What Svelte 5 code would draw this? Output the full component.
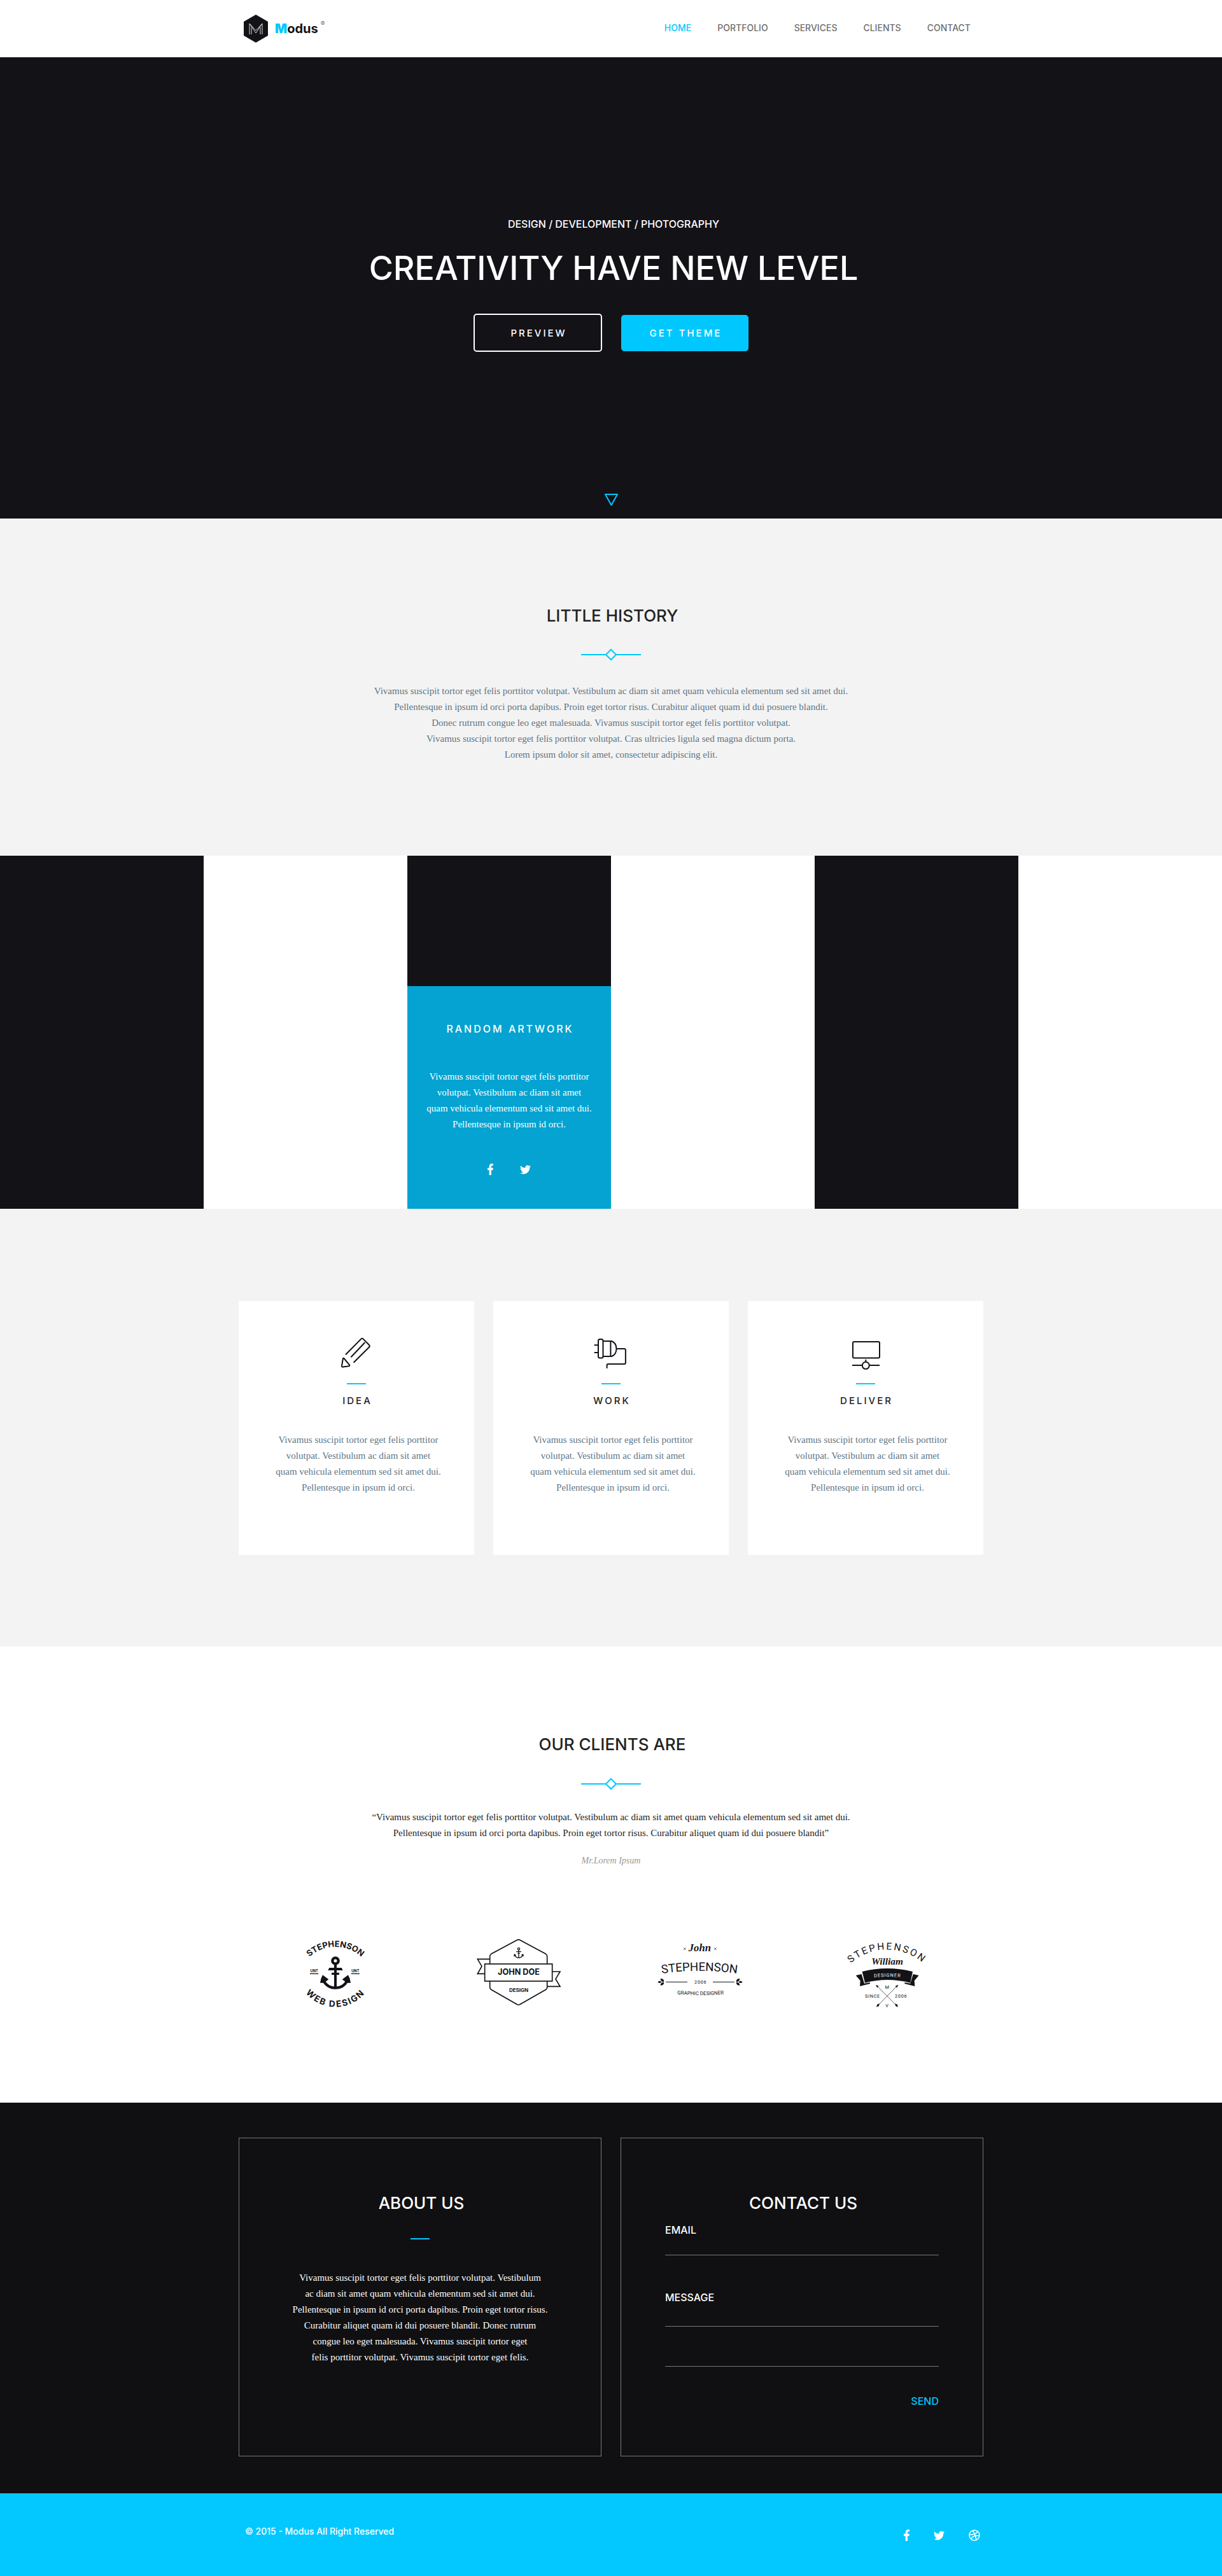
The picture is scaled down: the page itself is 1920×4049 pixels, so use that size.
<script>
  const nav = ['Home', 'Portfolio', 'Services', 'Clients', 'Contact'];
  const blurb = [
    'Vivamus suscipit tortor eget felis porttitor',
    'volutpat. Vestibulum ac diam sit amet',
    'quam vehicula elementum sed sit amet dui.',
    'Pellentesque in ipsum id orci.'
  ];
  const history = [
    'Vivamus suscipit tortor eget felis porttitor volutpat. Vestibulum ac diam sit amet quam vehicula elementum sed sit amet dui.',
    'Pellentesque in ipsum id orci porta dapibus. Proin eget tortor risus. Curabitur aliquet quam id dui posuere blandit.',
    'Donec rutrum congue leo eget malesuada. Vivamus suscipit tortor eget felis porttitor volutpat.',
    'Vivamus suscipit tortor eget felis porttitor volutpat. Cras ultricies ligula sed magna dictum porta.',
    'Lorem ipsum dolor sit amet, consectetur adipiscing elit.'
  ];
  const quote = [
    '“Vivamus suscipit tortor eget felis porttitor volutpat. Vestibulum ac diam sit amet quam vehicula elementum sed sit amet dui.',
    'Pellentesque in ipsum id orci porta dapibus. Proin eget tortor risus. Curabitur aliquet quam id dui posuere blandit”'
  ];
  const about = [
    'Vivamus suscipit tortor eget felis porttitor volutpat. Vestibulum',
    'ac diam sit amet quam vehicula elementum sed sit amet dui.',
    'Pellentesque in ipsum id orci porta dapibus. Proin eget tortor risus.',
    'Curabitur aliquet quam id dui posuere blandit. Donec rutrum',
    'congue leo eget malesuada. Vivamus suscipit tortor eget',
    'felis porttitor volutpat. Vivamus suscipit tortor eget felis.'
  ];
  const services = ['Idea', 'Work', 'Deliver'];
</script>

{#snippet lines(list)}
  {#each list as line}<span class="line">{line}</span>{/each}
{/snippet}

{#snippet divider()}
  <svg class="divider" width="94" height="20" viewBox="0 0 94 20" aria-hidden="true">
    <path d="M0 10H39M55 10H94M47 2L55 10L47 18L39 10Z" />
  </svg>
{/snippet}

{#snippet facebook()}
  <svg width="9" height="18" viewBox="22 0 275 512" preserveAspectRatio="none" aria-hidden="true">
    <path fill="currentColor" d="M279.14 288l14.22-92.66h-88.91v-60.13c0-25.35 12.42-50.06 52.24-50.06h40.42V6.26S260.43 0 225.36 0c-73.22 0-121.08 44.38-121.08 124.72v70.62H22.89V288h81.39v224h100.17V288z" />
  </svg>
{/snippet}

{#snippet twitter()}
  <svg width="17" height="17" viewBox="0 0 24 24" aria-hidden="true">
    <path fill="currentColor" d="M23.953 4.57a10 10 0 01-2.825.775 4.958 4.958 0 002.163-2.723c-.951.555-2.005.959-3.127 1.184a4.92 4.92 0 00-8.384 4.482C7.69 8.095 4.067 6.13 1.64 3.162a4.822 4.822 0 00-.666 2.475c0 1.71.87 3.213 2.188 4.096a4.904 4.904 0 01-2.228-.616v.06a4.923 4.923 0 003.946 4.827 4.996 4.996 0 01-2.212.085 4.936 4.936 0 004.604 3.417 9.867 9.867 0 01-6.102 2.105c-.39 0-.779-.023-1.17-.067a13.995 13.995 0 007.557 2.209c9.053 0 13.998-7.496 13.998-13.985 0-.21 0-.42-.015-.63A9.935 9.935 0 0024 4.59z" />
  </svg>
{/snippet}

<header class="top">
  <div class="wrap bar">
    <a class="brand" href="#home">
      <svg width="38" height="44" viewBox="0 0 38 44" aria-hidden="true">
        <path fill="#131217" d="M19 0L38 11V33L19 44L0 33V11Z" />
        <path fill="none" stroke="#d8d8d8" d="M9 31V14L19 29L29 14V31M12 31V20M26 31V20M9 14L19 25L29 14" />
      </svg>
      <span class="name"><b>M</b>odus</span><sup>®</sup>
    </a>
    <nav>
      {#each nav as item, i}
        <a href="#{item.toLowerCase()}" class:active={i === 0}>{item}</a>
      {/each}
    </nav>
  </div>
</header>

<main>
  <section class="hero" id="home">
    <div class="headline">
      <p>Design / Development / Photography</p>
      <h1>Creativity have new level</h1>
    </div>
    <div class="actions">
      <button type="button" class="outline">Preview</button>
      <button type="button" class="solid">Get theme</button>
    </div>
    <a class="down" href="#history" aria-label="Scroll down">
      <svg width="21" height="19" viewBox="0 0 21 19"><path d="M1 1H20L10.500 18Z" /></svg>
    </a>
  </section>

  <section class="history" id="history">
    <h2>Little history</h2>
    {@render divider()}
    <p class="copy">{@render lines(history)}</p>
  </section>

  <section class="gallery" id="portfolio">
    <div class="tile dark"></div>
    <div class="tile"></div>
    <div class="tile dark">
      <article class="overlay">
        <h3>Random artwork</h3>
        <p class="copy">{@render lines(blurb)}</p>
        <div class="social">
          <a href="#facebook" aria-label="Facebook">{@render facebook()}</a>
          <a href="#twitter" aria-label="Twitter">{@render twitter()}</a>
        </div>
      </article>
    </div>
    <div class="tile"></div>
    <div class="tile dark"></div>
    <div class="tile"></div>
  </section>

  <section class="services" id="services">
    <div class="wrap cards">
      {#each services as title, i}
        <article class="card">
          <svg class="icon" width="50" height="50" viewBox="0 0 50 50" aria-hidden="true">
            {#if i === 0}
              <path d="M8 27.300L32.600 2.400Q34 1 35.400 2.400L45 12Q46.500 14 45 15.500L20.600 39.700M38.400 8L16.400 31.300M3.900 33.500L2 45Q2 47 4 46.600L13.500 45.200Q14.800 44.600 14 43.400L5.800 33.500Q4.600 32.200 3.900 33.500Z" />
            {:else if i === 1}
              <rect x="5" y="3" width="7.500" height="29.500" rx="2.500" />
              <path d="M12.500 6H26Q33.500 9 33.500 18Q33.500 27 26 30H12.500M24.400 6V30M-1.300 12.300H5M-1.300 24H5M33.500 18H45.900Q47.900 18 47.900 20V40Q47.900 42 45.900 42H20.600Q18.600 42 18.600 44V48.700" />
            {:else}
              <rect x="5" y="7" width="42" height="25.500" rx="2" />
              <path d="M4 44H19.500M31 44H47M25.300 35V38.500" />
              <circle cx="25.300" cy="44.300" r="5.500" />
            {/if}
          </svg>
          <i class="dash"></i>
          <h3>{title}</h3>
          <p class="copy">{@render lines(blurb)}</p>
        </article>
      {/each}
    </div>
  </section>

  <section class="clients" id="clients">
    <h2>Our clients are</h2>
    {@render divider()}
    <blockquote class="copy">
      {@render lines(quote)}
      <cite>Mr.Lorem Ipsum</cite>
    </blockquote>
    <div class="logos">
      <svg width="160" height="120" viewBox="30 60 480 360" role="img" aria-label="Stephenson Web Design">
        <path id="arc-a" fill="none" d="M86 301A181 181 0 1 1 448 301" />
        <path id="arc-b" fill="none" d="M86 223A181 181 0 0 0 448 223" />
        <g class="wide" text-anchor="middle">
          <text font-size="39"><textPath href="#arc-a" startOffset="50%">STEPHENSON</textPath></text>
          <text font-size="41" letter-spacing="6"><textPath href="#arc-b" startOffset="50%">WEB DESIGN</textPath></text>
          <text x="167" y="240" font-size="17">UNT</text>
          <text x="361" y="240" font-size="17">UNT</text>
        </g>
        <path d="M147 245h40v4h-40zM341 245h40v4h-40zM261 198h12v112h-12zM238 219H296L302 231H232ZM249 242H285V252H249ZM207 253L235 274L221 284L225 290H195Q197 270 207 253ZM327 253L299 274L313 284L309 290H339Q337 270 327 253Z" />
        <g fill="none" stroke="#131217" stroke-width="13">
          <circle cx="267" cy="186" r="14" />
          <path d="M212 282Q230 314 267 314Q304 314 322 282" />
        </g>
      </svg>

      <svg width="160" height="120" viewBox="894 60 480 360" role="img" aria-label="John Doe Design">
        <g fill="none" stroke="#131217" stroke-width="5">
          <path d="M1124 88Q1130 84 1136 88L1259 154Q1265 158 1265 166V312Q1265 318 1259 322L1136 392Q1130 396 1124 392L1001 322Q995 318 995 312V166Q995 158 1001 154Z" />
          <path d="M995 178H937L957 212L937 247H970M1290 237H1326L1305 272L1326 307H1266" />
          <rect x="971" y="201" width="318" height="81" fill="#fff" />
        </g>
        <g fill="none" stroke="#131217" stroke-width="4">
          <circle cx="1131" cy="130" r="5" />
          <path d="M1131 135V172M1119 143H1143M1126 151H1136M1112 161Q1119 172 1131 172Q1143 172 1150 161" />
        </g>
        <path d="M1110 152L1120 160L1107 166ZM1152 152L1142 160L1155 166Z" />
        <g class="wide" text-anchor="middle">
          <text x="1131" y="253" font-size="38">JOHN DOE</text>
          <text x="1131" y="332" font-size="24">DESIGN</text>
        </g>
      </svg>

      <svg width="160" height="120" viewBox="78 60 480 360" role="img" aria-label="John Stephenson, graphic designer">
        <path id="arc-c" fill="none" d="M106 249Q304 217 500 249" />
        <path id="arc-d" fill="none" d="M180 343Q308 353 436 343" />
        <path fill="none" stroke="#131217" stroke-width="2" d="M228 124l11 11M239 124l-11 11M372 124l11 11M383 124l-11 11" />
        <path fill="none" stroke="#131217" stroke-width="3" d="M145 286H246M366 286H468" />
        <path d="M106 286Q115 276 125 286Q115 296 106 286ZM119 270Q136 270 136 285Q120 286 119 270ZM119 302Q136 302 136 287Q120 286 119 302ZM506 286Q497 276 487 286Q497 296 506 286ZM493 270Q476 270 476 285Q492 286 493 270ZM493 302Q476 302 476 287Q492 286 493 302Z" />
        <text class="script" x="304" y="142" font-size="50" text-anchor="middle">John</text>
        <g class="narrow" text-anchor="middle">
          <text font-size="56"><textPath href="#arc-c" startOffset="50%">STEPHENSON</textPath></text>
          <text x="308" y="294" font-size="22" letter-spacing="2">2006</text>
          <text font-size="24"><textPath href="#arc-d" startOffset="50%">GRAPHIC DESIGNER</textPath></text>
        </g>
      </svg>

      <svg width="160" height="120" viewBox="942 60 480 360" role="img" aria-label="Stephenson William, designer since 2006">
        <path id="arc-e" fill="none" d="M930 390A257 257 0 0 1 1444 390" />
        <path id="arc-f" fill="none" d="M1090 268Q1188 254 1288 268" />
        <path d="M1070 237Q1188 207 1308 237L1297 290Q1188 262 1083 290ZM1040 255L1067 249L1080 293L1107 288V294L1059 306L1061 280ZM1337 255L1310 249L1297 293L1270 288V294L1318 306L1316 280Z" />
        <path fill="none" stroke="#131217" stroke-width="2" d="M1140 305L1236 401M1234 305L1140 401" />
        <path d="M1134 299L1148 305L1140 313ZM1240 299L1226 305L1234 313ZM1138 404L1140 392L1152 388L1148 400ZM1238 404L1236 392L1224 388L1228 400Z" />
        <text class="script" x="1188" y="205" font-size="46" text-anchor="middle">William</text>
        <g class="narrow" text-anchor="middle">
          <text font-size="46" letter-spacing="8"><textPath href="#arc-e" startOffset="50%">STEPHENSON</textPath></text>
          <text class="light" font-size="22" letter-spacing="3"><textPath href="#arc-f" startOffset="50%">DESIGNER</textPath></text>
          <text x="1187" y="318" font-size="22">M</text>
          <text x="1187" y="405" font-size="22">V</text>
          <text x="1119" y="361" font-size="22" letter-spacing="2">SINCE</text>
          <text x="1253" y="361" font-size="22" letter-spacing="2">2006</text>
        </g>
      </svg>
    </div>
  </section>

  <section class="info" id="contact">
    <div class="wrap panels">
      <article class="panel">
        <h2>About us</h2>
        <i class="dash"></i>
        <p class="copy">{@render lines(about)}</p>
      </article>
      <form class="panel" onsubmit={(e) => e.preventDefault()}>
        <h2>Contact us</h2>
        <label for="email">Email</label>
        <input id="email" type="email" />
        <label for="message" class="second">Message</label>
        <textarea id="message"></textarea>
        <button type="submit">Send</button>
      </form>
    </div>
  </section>
</main>

<footer>
  <div class="wrap legal">
    <p>© 2015 - Modus All Right Reserved</p>
    <div class="social">
      <a href="#facebook" aria-label="Facebook">{@render facebook()}</a>
      <a href="#twitter" aria-label="Twitter">{@render twitter()}</a>
      <a href="#dribbble" aria-label="Dribbble">
        <svg width="18" height="18" viewBox="0 0 18 18" fill="none" stroke="currentColor" stroke-width="1.500">
          <circle cx="9" cy="9" r="8" />
          <path d="M6 1.500Q10.500 7 12 16.500M1 8Q10 8.500 14.500 3M3.500 15Q7.500 8 17 10" />
        </svg>
      </a>
    </div>
  </div>
</footer>

<style>
  :global(body) {
    background: #fff;
    color: #232323;
    font-family: Inter, 'Liberation Sans', sans-serif;
  }
  h1, h2, h3, p, blockquote { margin: 0; font-weight: 500; }
  a { color: inherit; text-decoration: none; }
  svg { display: block; overflow: visible; }
  button { padding: 0; border: 0; background: none; color: inherit; font: inherit; text-transform: uppercase; cursor: pointer; }
  h1, h2, h3 { text-transform: uppercase; }
  h2 { padding-left: 4px; font-size: 26px; line-height: 36px; }
  h3 { padding-left: 3px; font-size: 15px; line-height: 20px; letter-spacing: 3px; }
  .wrap { max-width: 1170px; margin: 0 auto; }
  .copy { font-family: 'Liberation Serif', serif; font-size: 15px; line-height: 25px; font-weight: 400; }
  .line { display: block; }
  .dash { display: block; width: 30px; height: 2px; background: #00c8ff; }
  .divider path { fill: none; stroke: #00c8ff; stroke-width: 2; }
  .social { display: flex; align-items: center; gap: 42px; height: 18px; color: #fff; }

  .bar { display: flex; align-items: center; justify-content: space-between; min-height: 90px; padding: 0 20px 0 8px; box-sizing: border-box; }
  .brand { display: flex; align-items: center; color: #131217; }
  .name { margin-left: 11px; font-size: 20px; font-weight: 700; }
  .name b { color: #00c8ff; }
  sup { align-self: flex-start; margin-left: 4px; font-size: 10px; line-height: 28px; color: #6f6f6f; }
  nav { display: flex; gap: 41px; padding-bottom: 2px; font-size: 14px; font-weight: 500; line-height: 20px; color: #6f6f6f; text-transform: uppercase; }
  nav .active { color: #00c8ff; }

  .hero { display: flex; flex-direction: column; align-items: center; padding: 252px 0 20px; background: #131217; color: #fff; }
  .headline { padding-left: 8px; text-align: center; text-transform: uppercase; }
  .headline p { font-size: 16px; line-height: 20px; }
  h1 { margin-top: 30px; font-size: 52px; line-height: 60px; }
  .actions { display: flex; align-items: center; gap: 30px; margin-top: 41px; }
  .actions button { box-sizing: border-box; width: 200px; height: 57px; padding-left: 3px; border-radius: 5px; font-size: 15px; font-weight: 500; letter-spacing: 3px; }
  .actions .outline { width: 202px; height: 60px; border: 2px solid #fff; }
  .actions .solid { background: #00c8ff; }
  .down { margin-top: 223px; }
  .down path { fill: none; stroke: #00c8ff; stroke-width: 2; stroke-linejoin: round; }

  .history, .clients { display: flex; flex-direction: column; align-items: center; text-align: center; }
  .history { padding: 135px 0 146px; background: #f3f3f3; }
  .history .divider { margin: 33px 0 35px; }
  .history .copy { color: #5d7586; }

  .gallery { display: grid; grid-template-columns: repeat(6, 1fr); min-height: 555px; }
  .tile { display: flex; align-items: flex-end; }
  .dark { background: #131217; }
  .overlay { display: flex; flex: 1; flex-direction: column; align-items: center; padding: 57px 0 53px; background: #04a3d1; color: #fff; text-align: center; }
  .overlay h3 { font-size: 16px; }
  .overlay .copy { margin: 53px 0 49px; }

  .services { padding: 145px 0 144px; background: #f3f3f3; }
  .cards { display: grid; grid-template-columns: repeat(3, 1fr); gap: 30px; }
  .card { display: flex; flex-direction: column; align-items: center; padding: 57px 0 93px; background: #fff; text-align: center; }
  .icon { fill: none; stroke: #131217; stroke-width: 2; stroke-linejoin: round; }
  .card .dash { margin: 22px 0 16px; }
  .card .copy { margin-top: 39px; padding-left: 6px; color: #5d7586; }

  .clients { padding: 136px 0 145px; }
  .clients .divider { margin: 34px 0 30px; }
  cite { display: block; margin-top: 18px; color: #999; font-size: 14px; }
  .logos { display: grid; grid-template-columns: repeat(4, 1fr); justify-items: center; width: 100%; max-width: 1152px; margin-top: 103px; }
  .logos svg { fill: #131217; }
  .wide { font-weight: 700; }
  .narrow { font-family: Roboto, sans-serif; }
  .light { fill: #fff; }
  .script { font-family: 'Liberation Serif', serif; font-style: italic; font-weight: 700; }

  .info { padding: 55px 0 58px; background: #101012; color: #fff; }
  .panels { display: grid; grid-template-columns: 1fr 1fr; gap: 30px; }
  .panel { display: flex; flex-direction: column; align-items: center; min-height: 501px; padding: 84px 69px 0; box-sizing: border-box; border: 1px solid #77787a; }
  .panel .dash { margin: 37px 0 48px; }
  .panel .copy { text-align: center; }
  label { align-self: flex-start; margin-top: 14px; font-size: 16px; font-weight: 500; line-height: 20px; text-transform: uppercase; }
  .second { margin-top: 56px; }
  input, textarea { box-sizing: border-box; width: 100%; padding: 0; border: 0; background: none; color: #fff; font: inherit; font-size: 15px; outline: 0; }
  input { height: 30px; border-bottom: 1px solid #77787a; }
  textarea { height: 99px; line-height: 31px; resize: none; background: linear-gradient(to top, #77787a 1px, transparent 1px) left bottom / 100% 63px; }
  .panel button { align-self: flex-end; margin-top: 44px; color: #00c8ff; font-size: 16px; font-weight: 500; line-height: 20px; }

  footer { background: #02c8ff; color: #fff; }
  .legal { display: flex; justify-content: space-between; min-height: 130px; padding: 50px 5px 0 10px; box-sizing: border-box; }
  .legal p { font-size: 14px; line-height: 20px; }
  .legal .social { gap: 38px; margin-top: 7px; }
</style>
